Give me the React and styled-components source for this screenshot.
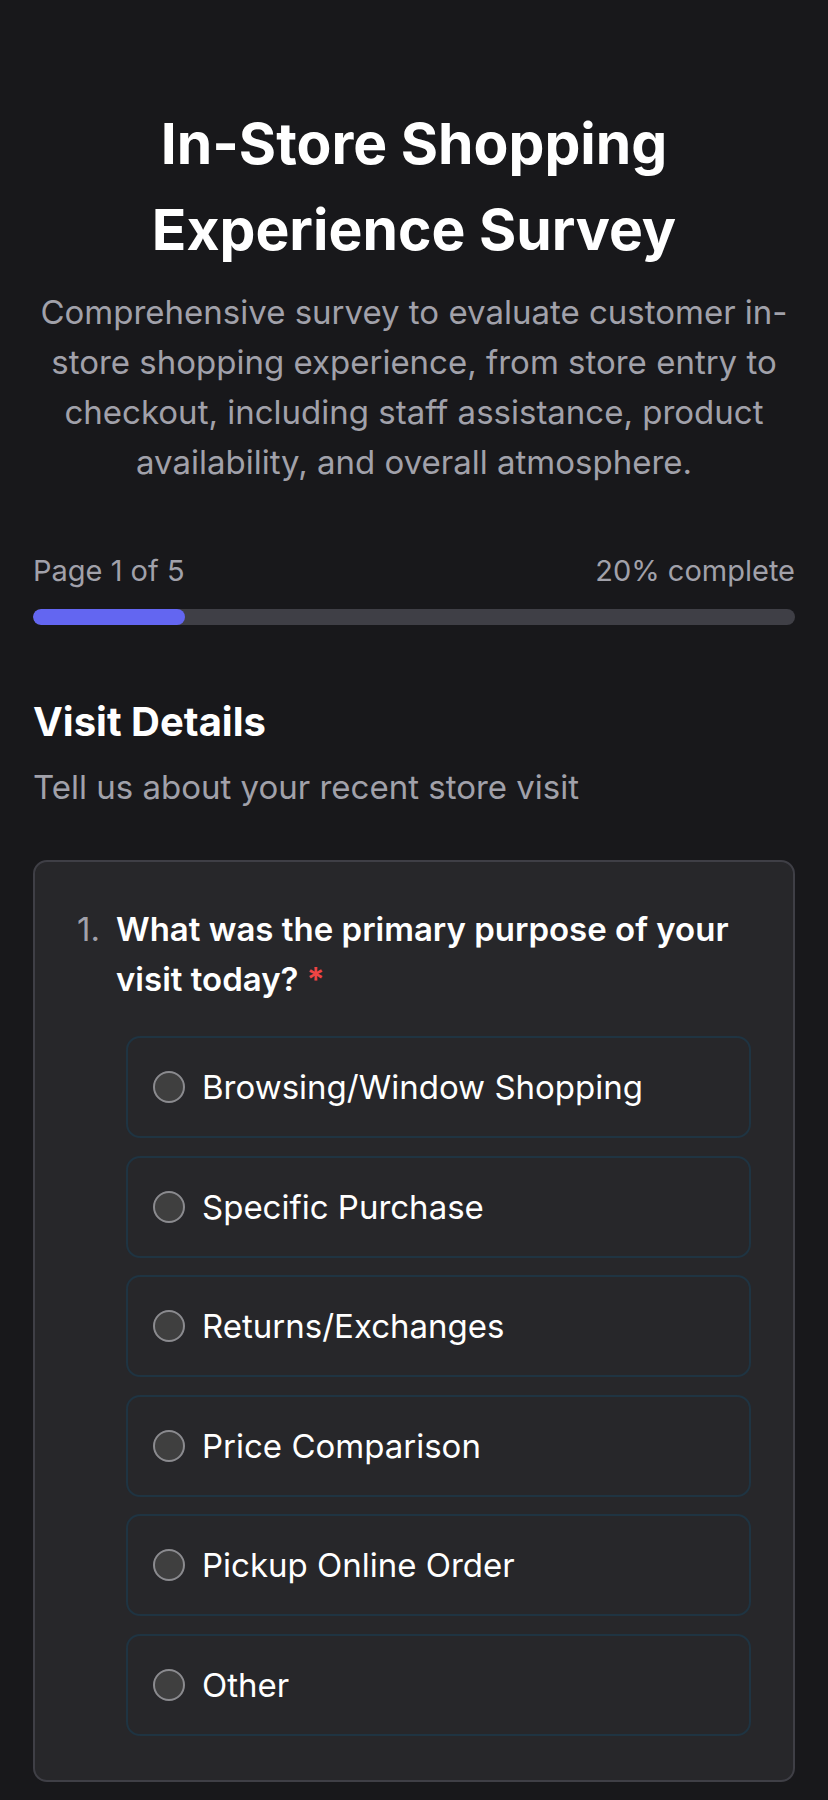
import React from 'react';
import styled, { createGlobalStyle } from 'styled-components';

const GlobalStyle = createGlobalStyle`
  body {
    margin: 0;
    background: #18181b;
    font-family: Inter, "Noto Sans", sans-serif;
    color: #fafafa;
  }
`;

const Page = styled.div`
  padding: 101px 33px 20px;
  min-height: 1800px;
  box-sizing: border-box;
`;

const Header = styled.header`
  text-align: center;
`;

const Title = styled.h1`
  margin: 0;
  font-size: 57px;
  line-height: 86px;
  font-weight: 650;
  color: #ffffff;
`;

const Description = styled.p`
  margin: 14px 0 0;
  font-size: 33px;
  line-height: 50px;
  color: #a1a1aa;
`;

const Progress = styled.div`
  margin-top: 64px;
`;

const ProgressLabels = styled.div`
  display: flex;
  justify-content: space-between;
  font-size: 29px;
  line-height: 40px;
  color: #a1a1aa;
`;

const Track = styled.div`
  margin-top: 18px;
  height: 16px;
  border-radius: 8px;
  background: #3f3f46;
  overflow: hidden;
`;

const Fill = styled.div`
  height: 100%;
  border-radius: 8px;
  background: #6366f1;
`;

const Section = styled.section`
  margin-top: 73px;
`;

const SectionTitle = styled.h2`
  margin: 0;
  font-size: 40px;
  line-height: 48px;
  font-weight: 650;
  color: #ffffff;
`;

const SectionText = styled.p`
  margin: 19px 0 0;
  font-size: 33px;
  line-height: 44px;
  color: #a1a1aa;
`;

const Card = styled.div`
  margin-top: 51px;
  background: #27272a;
  border: 2px solid #3f3f46;
  border-radius: 14px;
  padding: 42px 42px 44px 42px;
`;

const Question = styled.div`
  display: flex;
  gap: 14px;
  font-size: 33px;
  line-height: 50px;
`;

const Number = styled.span`
  color: #a1a1aa;
  min-width: 25px;
`;

const QuestionText = styled.span`
  font-weight: 600;
  color: #ffffff;
`;

const Required = styled.span`
  color: #ef4444;
`;

const Options = styled.div`
  display: flex;
  flex-direction: column;
  gap: 17.5px;
  margin: 32px 0 0 49px;
`;

const Option = styled.label`
  display: flex;
  align-items: center;
  gap: 17px;
  height: 102px;
  box-sizing: border-box;
  padding: 0 25px;
  border: 2px solid #1f3442;
  border-radius: 14px;
  background: #27272a;
  cursor: pointer;
`;

const Radio = styled.span`
  width: 32px;
  height: 32px;
  box-sizing: border-box;
  border-radius: 50%;
  border: 2px solid #8b8b8f;
  background: #3f3f3f;
  flex-shrink: 0;
`;

const OptionText = styled.span`
  font-size: 33px;
  color: #ffffff;
`;

const options = [
  'Browsing/Window Shopping',
  'Specific Purchase',
  'Returns/Exchanges',
  'Price Comparison',
  'Pickup Online Order',
  'Other',
];

const App = () => {
  const progress = 20;
  return (
    <>
      <GlobalStyle />
      <Page>
        <Header>
          <Title>In-Store Shopping Experience Survey</Title>
          <Description>
            Comprehensive survey to evaluate customer in-store shopping
            experience, from store entry to checkout, including staff
            assistance, product availability, and overall atmosphere.
          </Description>
        </Header>

        <Progress>
          <ProgressLabels>
            <span>Page 1 of 5</span>
            <span>{progress}% complete</span>
          </ProgressLabels>
          <Track>
            <Fill style={{ width: `${progress}%` }} />
          </Track>
        </Progress>

        <Section>
          <SectionTitle>Visit Details</SectionTitle>
          <SectionText>Tell us about your recent store visit</SectionText>

          <Card>
            <Question>
              <Number>1.</Number>
              <QuestionText>
                What was the primary purpose of your visit today?{' '}
                <Required>*</Required>
              </QuestionText>
            </Question>
            <Options>
              {options.map((o) => (
                <Option key={o}>
                  <Radio />
                  <OptionText>{o}</OptionText>
                </Option>
              ))}
            </Options>
          </Card>
        </Section>
      </Page>
    </>
  );
};

export default App;
